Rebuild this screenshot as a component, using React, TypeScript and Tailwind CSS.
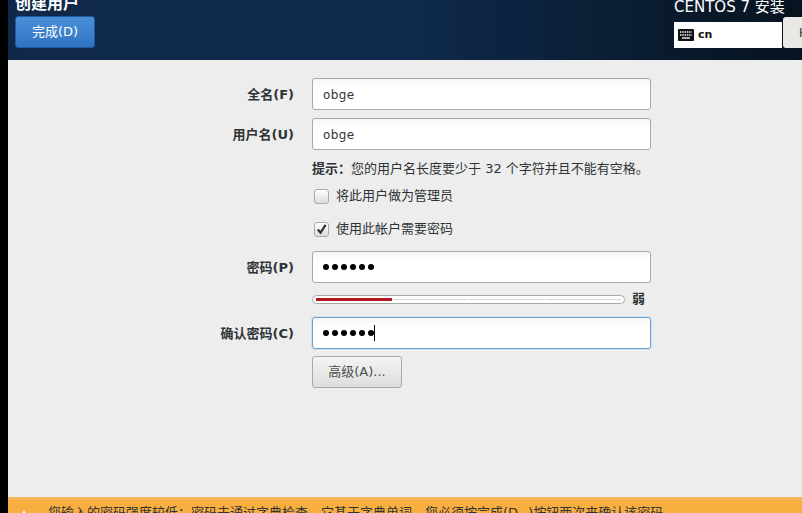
const cjk = "font-['DejaVu_Sans','Noto_Sans_CJK_SC',sans-serif]";

function Label({ children }: { children: string }) {
  return <label className="w-[304px] pt-[2px] pr-[18px] text-right text-[13px] leading-[20px] font-bold text-[#2e3436]">{children}</label>;
}

function Field({ focused, children }: { focused?: boolean; children: React.ReactNode }) {
  return (
    <div
      className={
        "flex h-[32px] w-[339px] items-center rounded-[3px] border bg-gradient-to-b from-[#f6f6f6] to-white to-30% px-[10px] text-[#2e3436] " +
        (focused ? "border-[#6d9ec9] shadow-[0_0_0_1px_#cfe0ef]" : "border-[#a9a9a6]")
      }
    >
      {children}
    </div>
  );
}

function Dots() {
  return (
    <span className="flex gap-[3px]">
      {[0, 1, 2, 3, 4, 5].map((i) => (
        <span key={i} className="h-[6px] w-[6px] rounded-full bg-black" />
      ))}
    </span>
  );
}

function Checkbox({ checked, children }: { checked?: boolean; children: string }) {
  return (
    <div className="flex items-center gap-[7px]">
      <span className="flex h-[15px] w-[15px] items-center justify-center rounded-[3px] border border-[#a9a9a6] bg-gradient-to-b from-white to-[#dcdcda]">
        {checked && (
          <svg viewBox="0 0 14 14" className="h-[14px] w-[14px]">
            <path d="M3 7.5 L6 11 L11.5 2.5" fill="none" stroke="#2e3436" strokeWidth="2.4" />
          </svg>
        )}
      </span>
      <span className="text-[13px] leading-[20px] text-[#2e3436]">{children}</span>
    </div>
  );
}

export default function App() {
  return (
    <div className={"flex h-[513px] w-[802px] overflow-hidden bg-black " + cjk}>
      <div className="w-[8px] shrink-0 bg-black" />
      <div className="flex min-w-0 flex-1 flex-col bg-[#ededed]">
        <header className="flex h-[60px] shrink-0 justify-between overflow-hidden bg-gradient-to-r from-[#10294a] via-[#0f2a4d] to-[#07131f]">
          <div className="pl-[7px]">
            <h1 className="mt-[-6px] h-[22px] text-[16px] leading-[20px] font-bold text-white">创建用户</h1>
            <button className="flex h-[32px] w-[80px] items-center justify-center rounded-[3px] border border-[#1f5da0] bg-gradient-to-b from-[#4a90d9] to-[#2f74c0] text-[13px] text-white">
              完成(D)
            </button>
          </div>
          <div className="w-[128px] shrink-0">
            <div className="mt-[-3px] h-[20px] text-[15px] leading-[20px] whitespace-nowrap text-white">CENTOS 7 安装</div>
            <div className="flex items-end">
              <div className="flex h-[26px] w-[108px] shrink-0 items-center gap-[4px] bg-white pl-[4px]">
                <svg viewBox="0 0 16 12" className="h-[12px] w-[16px]">
                  <rect width="16" height="12" rx="1" fill="#111" />
                  <path d="M2 3h12M2 6h12" stroke="#fff" strokeWidth="1.3" strokeDasharray="1.4 0.9" />
                  <path d="M4 9h8" stroke="#fff" strokeWidth="1.3" />
                </svg>
                <span className="text-[11px] font-bold text-[#111]">cn</span>
              </div>
              <div className="ml-[1px] flex h-[31px] min-w-0 flex-1 items-center overflow-hidden rounded-l-[3px] bg-[#e8e8e6] pl-[16px] text-[12px] text-[#333]">
                H
              </div>
            </div>
          </div>
        </header>

        <main className="flex flex-1 flex-col pt-[18px]">
          <div className="flex items-center">
            <Label>全名(F)</Label>
            <Field><span className="pt-[2px] text-[12px] tracking-[0.4px]">obge</span></Field>
          </div>
          <div className="mt-[8px] flex items-center">
            <Label>用户名(U)</Label>
            <Field><span className="pt-[2px] text-[12px] tracking-[0.4px]">obge</span></Field>
          </div>
          <div className="mt-[9px] pl-[304px] text-[13px] leading-[20px] whitespace-nowrap text-[#2e3436]">
            <b>提示：</b>您的用户名长度要少于 32 个字符并且不能有空格。
          </div>
          <div className="mt-[7px] pl-[306px]">
            <Checkbox>将此用户做为管理员</Checkbox>
          </div>
          <div className="mt-[13px] pl-[306px]">
            <Checkbox checked>使用此帐户需要密码</Checkbox>
          </div>
          <div className="mt-[12px] flex items-center">
            <Label>密码(P)</Label>
            <Field><Dots /></Field>
          </div>
          <div className="mt-[11px] flex h-[10px] items-center pl-[304px]">
            <div className="flex h-[9px] w-[313px] items-center gap-[1px] rounded-full border border-[#a9a9a6] bg-white px-[3px]">
              <div className="h-[3px] flex-1 bg-[#b2161e]" />
              <div className="h-[1px] flex-1 bg-[#d5d5d3]" />
              <div className="h-[1px] flex-1 bg-[#d5d5d3]" />
              <div className="h-[1px] flex-1 bg-[#d5d5d3]" />
            </div>
            <span className="ml-[7px] text-[13px] font-bold text-[#2e3436]">弱</span>
          </div>
          <div className="mt-[13px] flex items-center">
            <Label>确认密码(C)</Label>
            <Field focused>
              <Dots />
              <span className="h-[16px] w-px bg-black" />
            </Field>
          </div>
          <div className="mt-[7px] pl-[304px]">
            <button className="h-[32px] w-[90px] rounded-[3px] border border-[#a9a9a6] bg-gradient-to-b from-[#f4f4f3] to-[#dededc] text-[13px] text-[#4a4f50]">
              高级(A)...
            </button>
          </div>
        </main>

        <footer className="flex h-[16px] shrink-0 overflow-hidden border-t-[3px] border-[#f5b759] bg-[#f9ae40] pt-[3px] pl-[9px] text-[13px] leading-[20px] whitespace-nowrap text-[#2e3436]">
          <svg viewBox="0 0 14 14" className="mt-[6px] h-[14px] w-[14px] shrink-0">
            <path d="M7 1 L13 13 H1 Z" fill="#fff" />
          </svg>
          <span className="ml-[17px]">
            您输入的密码强度较低：密码未通过字典检查 - 它基于字典单词。您必须按完成(D<span className="ml-[10px]">)</span>按钮两次来确认该密码
          </span>
        </footer>
      </div>
    </div>
  );
}
